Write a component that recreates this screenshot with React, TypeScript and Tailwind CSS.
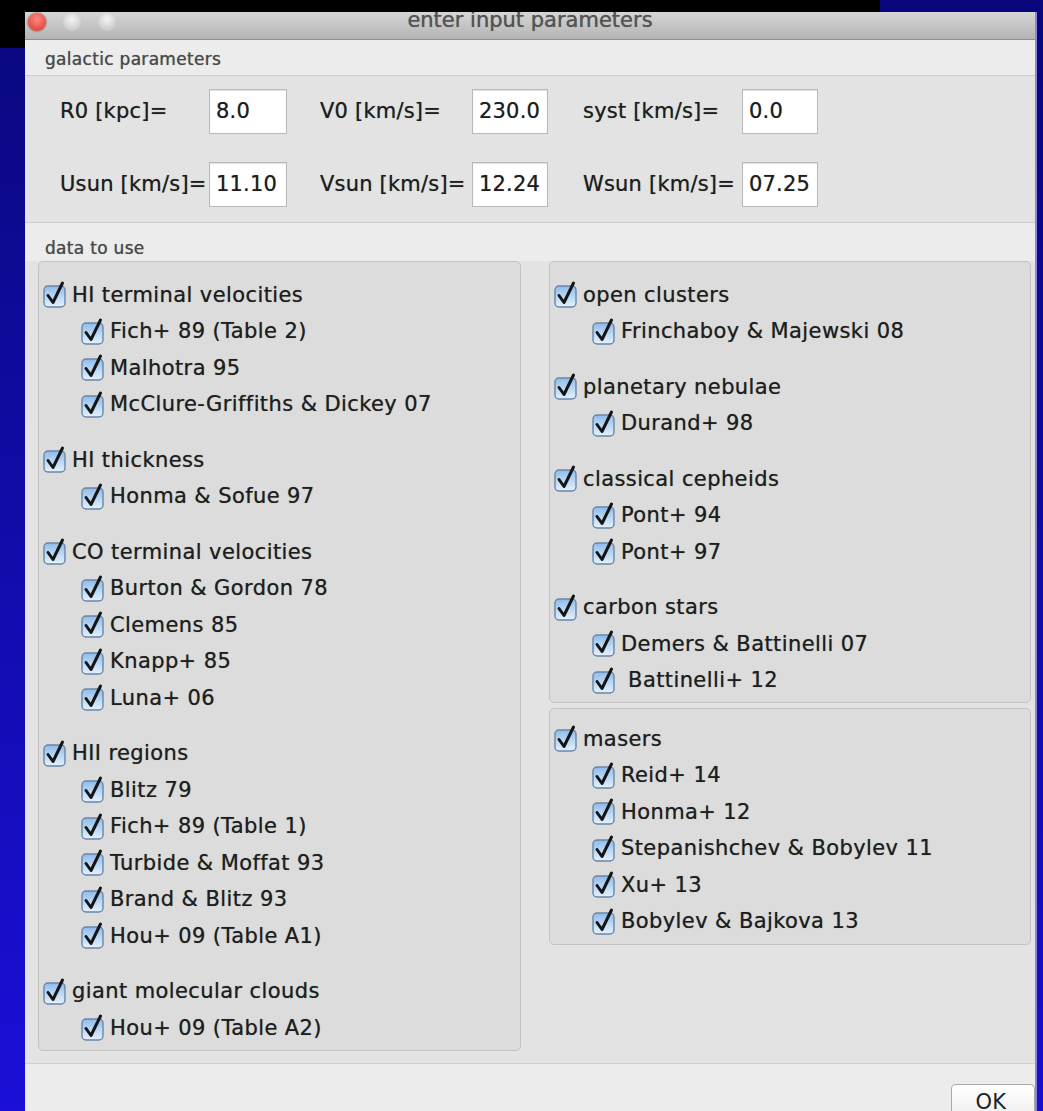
import React from "react";

type Group = { title: string; items: string[] };

const leftGroups: Group[] = [
  { title: "HI terminal velocities", items: ["Fich+ 89 (Table 2)", "Malhotra 95", "McClure-Griffiths & Dickey 07"] },
  { title: "HI thickness", items: ["Honma & Sofue 97"] },
  { title: "CO terminal velocities", items: ["Burton & Gordon 78", "Clemens 85", "Knapp+ 85", "Luna+ 06"] },
  { title: "HII regions", items: ["Blitz 79", "Fich+ 89 (Table 1)", "Turbide & Moffat 93", "Brand & Blitz 93", "Hou+ 09 (Table A1)"] },
  { title: "giant molecular clouds", items: ["Hou+ 09 (Table A2)"] },
];

const rightGroups: Group[] = [
  { title: "open clusters", items: ["Frinchaboy & Majewski 08"] },
  { title: "planetary nebulae", items: ["Durand+ 98"] },
  { title: "classical cepheids", items: ["Pont+ 94", "Pont+ 97"] },
  { title: "carbon stars", items: ["Demers & Battinelli 07", "\u00a0Battinelli+ 12"] },
];

const maserGroup: Group = {
  title: "masers",
  items: ["Reid+ 14", "Honma+ 12", "Stepanishchev & Bobylev 11", "Xu+ 13", "Bobylev & Bajkova 13"],
};

const CheckMark = () => (
  <svg width="24" height="26" viewBox="0 0 24 26" className="shrink-0 overflow-visible">
    <defs>
      <linearGradient id="cbfill" x1="0" y1="0" x2="0" y2="1">
        <stop offset="0" stopColor="#8fbbe8" />
        <stop offset="0.5" stopColor="#b9d8f6" />
        <stop offset="1" stopColor="#e4f1fd" />
      </linearGradient>
    </defs>
    <rect x="1" y="4" width="21" height="21" rx="4" fill="url(#cbfill)" stroke="#6a86a8" strokeWidth="1.4" />
    <path d="M5 13.5 L10 20.5 L19.5 1" fill="none" stroke="#151515" strokeWidth="3" strokeLinecap="round" strokeLinejoin="round" />
  </svg>
);

const Row = ({ label, child }: { label: string; child?: boolean }) => (
  <div className={`flex h-[36.5px] items-center gap-[5px] whitespace-pre ${child ? "pl-[42px]" : "pl-[4px]"}`}>
    <CheckMark />
    <span>{label}</span>
  </div>
);

const GroupList = ({ groups }: { groups: Group[] }) => (
  <div className="flex flex-col gap-[19px]">
    {groups.map((g) => (
      <div key={g.title}>
        <Row label={g.title} />
        {g.items.map((it) => (
          <Row key={it} label={it} child />
        ))}
      </div>
    ))}
  </div>
);

const Field = ({ label, value, pad }: { label: string; value: string; pad?: string }) => (
  <>
    <span className={`flex items-center whitespace-nowrap ${pad ?? ""}`}>{label}</span>
    <div className="flex h-[45px] items-center border border-[#b9b9b9] bg-white pl-[6px] shadow-[inset_0_1px_1px_rgba(0,0,0,0.12)]">
      {value}
    </div>
  </>
);

export default function App() {
  return (
    <div className="flex h-[1111px] w-full flex-col overflow-hidden bg-[#0b0880] font-['DejaVu_Sans',sans-serif] text-[21px] tracking-[0.4px] text-[#1e1e1e] [text-shadow:0_0_0.7px_rgba(0,0,0,0.55)]">
      {/* desktop strip above the window */}
      <div className="flex h-[12px] shrink-0">
        <div className="w-[880px] bg-black" />
        <div className="flex-1 bg-[#08067a]" />
      </div>

      <div className="flex flex-1">
        <div className="flex w-[25px] shrink-0 flex-col">
          <div className="h-[36px] bg-black" />
          <div className="flex-1 bg-[linear-gradient(#0b0882,#1b0fd8)]" />
        </div>

        <div className="flex w-[1012px] shrink-0 flex-col border-r-2 border-[#8a86d8] bg-[#e4e4e4]">
          {/* title bar */}
          <div className="relative flex h-[28px] shrink-0 items-start justify-center overflow-hidden border-b border-[#8f8f8f] bg-[linear-gradient(#d6d6d6,#b4b4b4)]">
            <div className="absolute left-[3px] top-[1px] flex gap-[17px]">
              <span className="h-[18px] w-[18px] rounded-full bg-[radial-gradient(circle_at_50%_35%,#ff8a80,#d8332a)] shadow-[0_0_2px_#800]" />
              <span className="h-[18px] w-[18px] rounded-full bg-[radial-gradient(circle_at_50%_35%,#f4f4f4,#bdbdbd)]" />
              <span className="h-[18px] w-[18px] rounded-full bg-[radial-gradient(circle_at_50%_35%,#f4f4f4,#bdbdbd)]" />
            </div>
            <span className="-mt-[7px] text-[21px] tracking-normal text-[#555]">enter input parameters</span>
          </div>

          {/* galactic parameters */}
          <div className="flex h-[36px] shrink-0 items-end border-b border-[#cdcdcd] bg-[#ececec] pb-[3px] pl-[20px] text-[17px] tracking-[0.3px] text-[#4a4a4a]">
            galactic parameters
          </div>
          <div className="grid shrink-0 grid-cols-[149px_78px_185px_76px_194px_76px] gap-y-[28px] border-b border-[#cbcbcb] bg-[#e3e3e3] pb-[15px] pl-[35px] pt-[13px] text-[21px] tracking-[0.2px]">
            <Field label="R0 [kpc]=" value="8.0" />
            <Field label="V0 [km/s]=" value="230.0" pad="pl-[33px]" />
            <Field label="syst [km/s]=" value="0.0" pad="pl-[35px]" />
            <Field label="Usun [km/s]=" value="11.10" />
            <Field label="Vsun [km/s]=" value="12.24" pad="pl-[33px]" />
            <Field label="Wsun [km/s]=" value="07.25" pad="pl-[35px]" />
          </div>

          {/* data to use */}
          <div className="flex h-[38px] shrink-0 items-end bg-[#ececec] pb-0 pl-[20px] text-[17px] tracking-[0.3px] text-[#4a4a4a]">
            data to use
          </div>
          <div className="flex h-[803px] shrink-0 gap-[28px] border-b border-[#cfcfcf] bg-[#e3e3e3] pl-[13px] pr-[4px]">
            <div className="h-[790px] w-[483px] rounded-[5px] border border-[#c3c3c3] bg-[#dcdcdc] pt-[15px]">
              <GroupList groups={leftGroups} />
            </div>
            <div className="flex w-[482px] flex-col gap-[5px]">
              <div className="h-[442px] rounded-[5px] border border-[#c3c3c3] bg-[#dcdcdc] pt-[15px]">
                <GroupList groups={rightGroups} />
              </div>
              <div className="h-[237px] rounded-[5px] border border-[#c3c3c3] bg-[#dcdcdc] pt-[12px]">
                <GroupList groups={[maserGroup]} />
              </div>
            </div>
          </div>

          {/* buttons */}
          <div className="flex flex-1 items-start justify-end bg-[#ececec] pt-[20px]">
            <button className="h-[30px] w-[84px] rounded-t-[5px] border border-b-0 border-[#a8a8a8] bg-[linear-gradient(#ffffff,#f0f0f0)] pr-[4px] pt-[6px] text-[21px] leading-none text-[#222]">
              OK
            </button>
          </div>
        </div>

        <div className="flex-1 bg-[linear-gradient(#08067a,#1a0ed0)]" />
      </div>
    </div>
  );
}
